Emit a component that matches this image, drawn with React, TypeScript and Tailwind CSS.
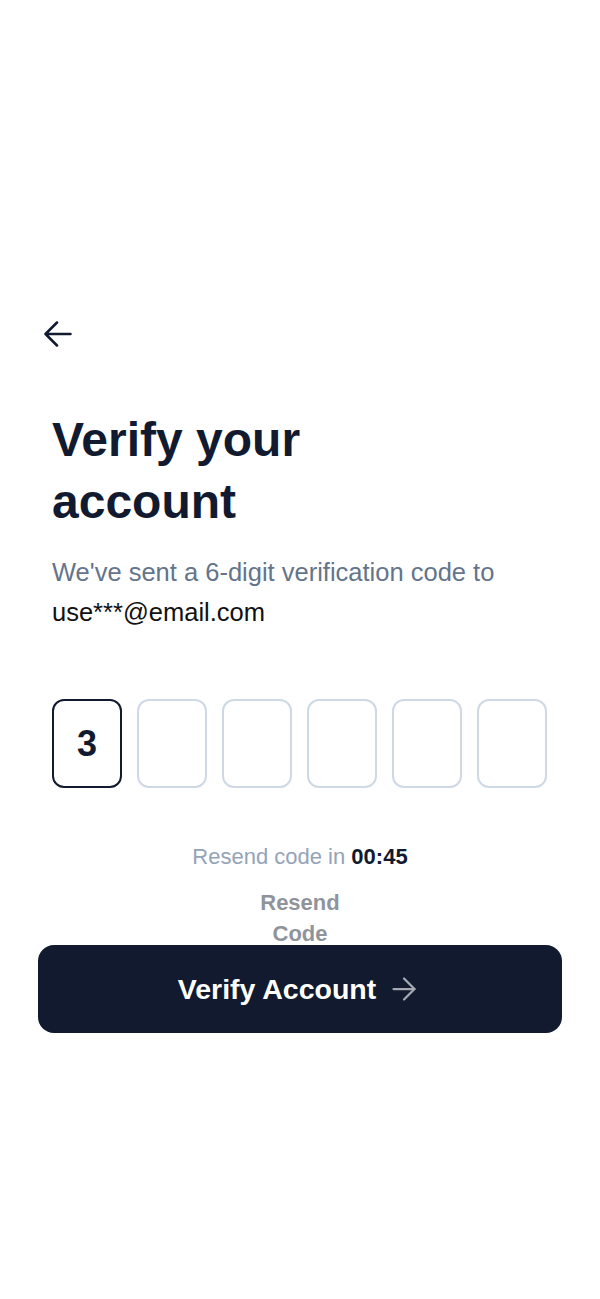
import { ArrowRight } from "lucide-react"

const digits = ["3", "", "", "", "", ""]

const BackArrow = () => (
    <svg width="28" height="28" viewBox="0 0 28 28" fill="none" stroke="currentColor" strokeWidth="2.5" strokeLinecap="round" strokeLinejoin="round">
        <path d="M26.5 14H1.5M13 2.5 1.5 14 13 25.5" />
    </svg>
)

const App = () => {
    return (
        <div className="min-h-[1299px] w-full bg-white font-['Liberation_Sans',Arial,sans-serif] text-[#111a2e]">
            <div className="px-[38px] pt-[320px]">
                <button className="ml-[6px] block text-[#111a2e]">
                    <BackArrow />
                </button>
                <div className="px-[14px]">
                    <h1 className="mt-[61px] text-[48px] font-bold leading-[62px]">Verify your<br />account</h1>
                    <p className="mt-[19px] text-[25.5px] leading-[40px] text-[#64748b]">
                        We've sent a 6-digit verification code to <span className="text-[#111111]">use***@email.com</span>
                    </p>
                    <div className="mt-[67px] flex gap-[15px]">
                        {digits.map((d, i) => (
                            <div key={i} className={`flex h-[89px] w-[70px] items-center justify-center rounded-xl border-2 text-[36px] font-bold ${i === 0 ? "border-[#111a2e]" : "border-[#cfd9e6]"}`}>{d}</div>
                        ))}
                    </div>
                    <div className="mt-[52px] text-center text-[22px] text-[#94a3b8]">
                        Resend code in <span className="font-bold text-[#111a2e]">00:45</span>
                    </div>
                    <button className="mx-auto mt-[14px] block w-[90px] text-center text-[22px] font-bold leading-[31px] text-[#8f949c]">Resend Code</button>
                </div>
                <button className="mt-[-4px] flex h-[88px] w-full items-center justify-center gap-2.5 rounded-2xl bg-[#111a2e] text-[28.5px] font-bold text-white">
                    Verify Account
                    <ArrowRight size={36} strokeWidth={1.5} className="text-[#a3a8b2]" />
                </button>
            </div>
        </div>
    )
}

export default App
